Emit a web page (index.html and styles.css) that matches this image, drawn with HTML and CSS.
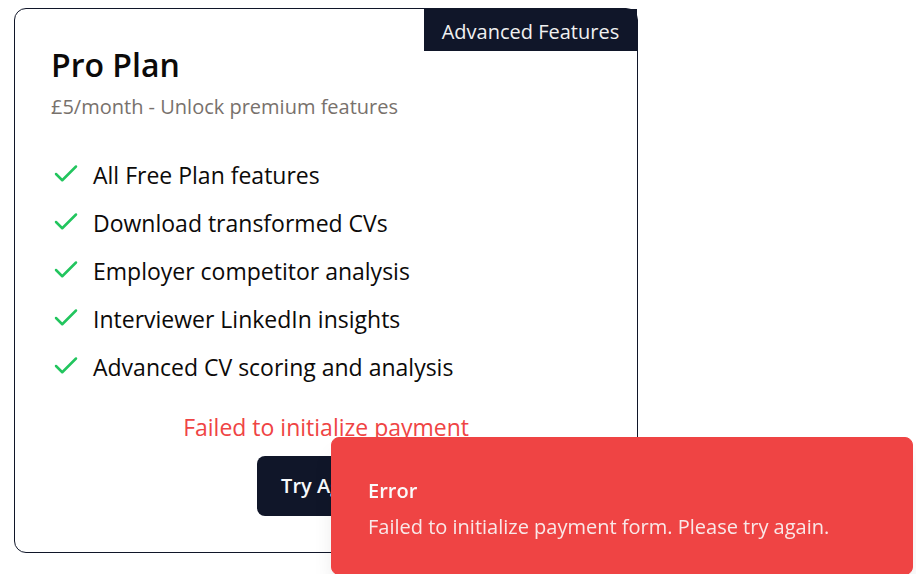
FILE: index.html
```html
<!DOCTYPE html>
<html lang="en">
<head>
<meta charset="utf-8">
<meta name="viewport" content="width=device-width, initial-scale=1">
<title>Pro Plan</title>
<link rel="stylesheet" href="styles.css">
</head>
<body>
<main class="page">
  <section class="card">
    <span class="badge">Advanced Features</span>
    <header class="card-header">
      <h1 class="title">Pro Plan</h1>
      <p class="subtitle">£5/month - Unlock premium features</p>
    </header>
    <ul class="features">
      <li><svg class="check" viewBox="0 0 24 24" aria-hidden="true"><path d="M20 6 9 17l-5-5"/></svg><span>All Free Plan features</span></li>
      <li><svg class="check" viewBox="0 0 24 24" aria-hidden="true"><path d="M20 6 9 17l-5-5"/></svg><span>Download transformed CVs</span></li>
      <li><svg class="check" viewBox="0 0 24 24" aria-hidden="true"><path d="M20 6 9 17l-5-5"/></svg><span>Employer competitor analysis</span></li>
      <li><svg class="check" viewBox="0 0 24 24" aria-hidden="true"><path d="M20 6 9 17l-5-5"/></svg><span>Interviewer LinkedIn insights</span></li>
      <li><svg class="check" viewBox="0 0 24 24" aria-hidden="true"><path d="M20 6 9 17l-5-5"/></svg><span>Advanced CV scoring and analysis</span></li>
    </ul>
    <div class="payment">
      <p class="payment-error">Failed to initialize payment</p>
      <button class="retry" type="button">Try Again</button>
    </div>
  </section>
</main>
<div class="toast" role="alert">
  <strong class="toast-title">Error</strong>
  <p class="toast-text">Failed to initialize payment form. Please try again.</p>
</div>
</body>
</html>
```

FILE: styles.css
```css
* {
  box-sizing: border-box;
}

body {
  margin: 0;
  overflow: hidden;
  background: #fff;
  color: #0c0a09;
  font-family: "Segoe UI", "Open Sans", "Noto Sans", sans-serif;
}

h1,
p,
ul {
  margin: 0;
  padding: 0;
}

.page {
  width: 70%;
  padding: 8px 3px 0 14px;
}

.card {
  position: relative;
  padding: 36px;
  border: 1px solid #101629;
  border-radius: 12px;
}

.badge {
  position: absolute;
  top: 0;
  right: 0;
  padding: 8px 18px 4px;
  background: #101629;
  color: #f1f1f1;
  font-size: 20px;
  line-height: 30px;
}

.title {
  font-size: 32px;
  font-weight: 600;
  line-height: 40px;
}

.subtitle {
  margin-top: 6px;
  color: #78716c;
  font-size: 20px;
  line-height: 32px;
}

.features {
  display: grid;
  gap: 12px;
  margin-top: 34px;
  list-style: none;
  font-size: 23px;
  line-height: 36px;
}

.features li {
  display: flex;
  align-items: center;
  gap: 12px;
}

.check {
  width: 30px;
  height: 30px;
  margin-bottom: 2px;
  fill: none;
  stroke: #22c55e;
  stroke-width: 2;
  stroke-linecap: round;
  stroke-linejoin: round;
}

.payment {
  display: flex;
  flex-direction: column;
  align-items: center;
  gap: 12px;
  margin-top: 25px;
}

.payment-error {
  color: #ef4444;
  font-size: 23px;
  line-height: 34px;
}

.retry {
  padding: 15px 24px;
  border: 0;
  border-radius: 8px;
  background: #101629;
  color: #f8fafc;
  font: 600 20px/30px "Segoe UI", "Open Sans", "Noto Sans", sans-serif;
}

.toast {
  position: fixed;
  right: 3px;
  bottom: -1px;
  left: 331px;
  padding: 38px 36px 32px;
  border: 1px solid #ef4444;
  border-radius: 8px;
  background: #ef4444;
  box-shadow: 0 15px 22px -4px rgba(0, 0, 0, 0.1), 0 6px 9px -6px rgba(0, 0, 0, 0.1);
  color: #fafafa;
  font-size: 20px;
  line-height: 30px;
}

.toast-title {
  display: block;
  font-weight: 600;
}

.toast-text {
  margin-top: 6px;
  opacity: 0.9;
}
```
